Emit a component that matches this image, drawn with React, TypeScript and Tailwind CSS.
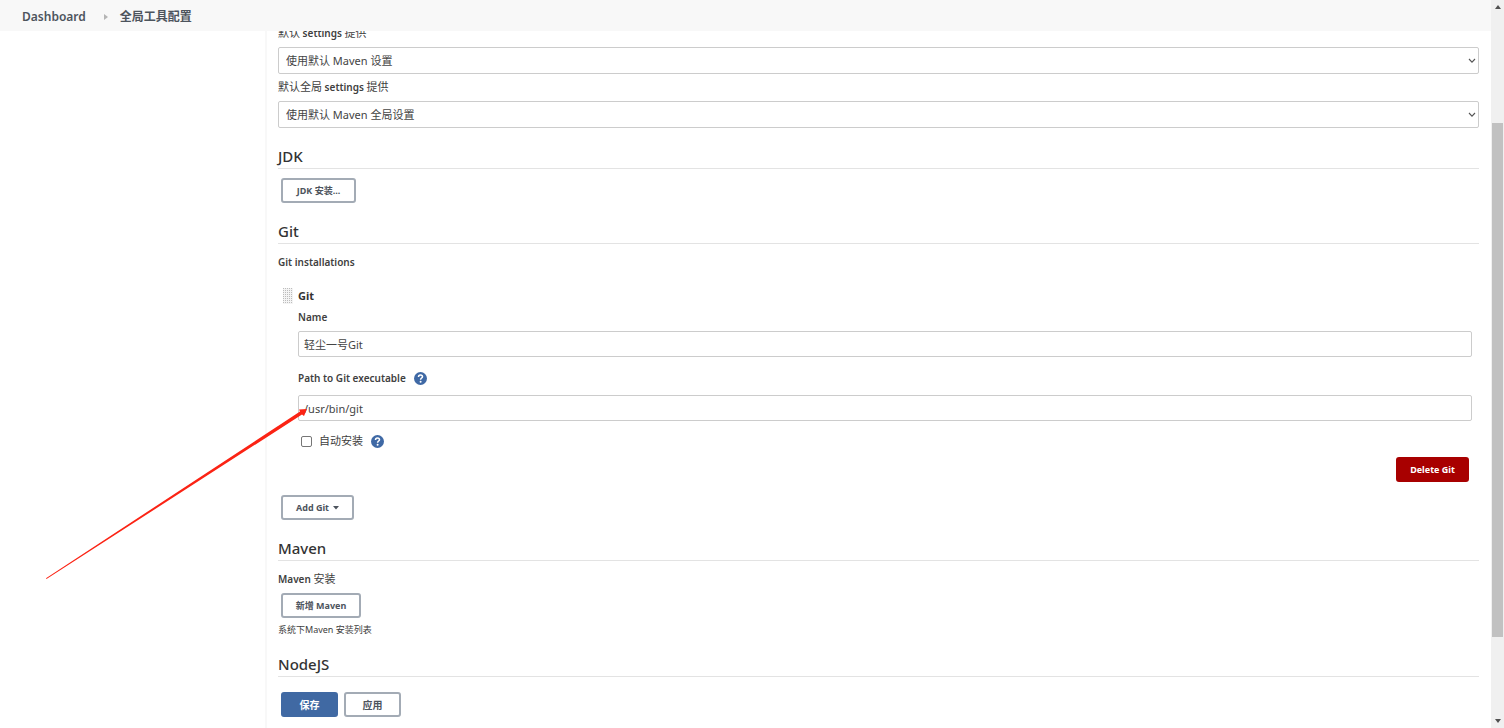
import React, { useState } from "react";
import clsx from "clsx";

type ButtonProps = React.ButtonHTMLAttributes<HTMLButtonElement> & {
  variant?: "outline" | "primary" | "danger";
  size?: "sm" | "md";
};

const Button = ({ variant = "outline", size = "sm", className, ...props }: ButtonProps) => (
  <button
    type="button"
    className={clsx(
      "flex h-[25px] items-center justify-center rounded-[3px] border-2 leading-4 font-bold",
      size === "sm" && "text-[9px]",
      size === "md" && "text-[10px]",
      variant === "outline" && "border-[#a3abb5] bg-white text-[#4d545d]",
      variant === "primary" && "border-[#4069a3] bg-[#4069a3] text-white",
      variant === "danger" && "border-[#a80000] bg-[#a80000] text-white",
      className
    )}
    {...props}
  />
);

const SectionTitle = ({ children }: { children: React.ReactNode }) => (
  <h2 className="h-[23px] border-b border-[#e3e3e3] text-[15px] leading-5 font-medium text-[#333333]">
    {children}
  </h2>
);

const Cjk = ({ children }: { children: React.ReactNode }) => (
  <span className="text-[11px] font-normal">{children}</span>
);

type SelectFieldProps = {
  id: string;
  label: React.ReactNode;
  option: string;
};

const SelectField = ({ id, label, option }: SelectFieldProps) => (
  <div className="flex flex-col gap-1.5">
    <label htmlFor={id} className="h-4 text-[10px] leading-4 font-semibold">
      {label}
    </label>
    <div className="relative">
      <select
        id={id}
        className="block h-[27px] w-full appearance-none rounded-[2px] border border-[#cccccc] bg-white pt-0.5 pr-6 pl-[7px] text-[11px] text-[#444444]"
      >
        <option>{option}</option>
      </select>
      <svg
        viewBox="0 0 8 6"
        className="pointer-events-none absolute top-[11px] right-[3px] h-1.5 w-2"
        fill="none"
        stroke="#555555"
        strokeWidth="1.1"
      >
        <path d="M1 1l3 3.200L7 1" />
      </svg>
    </div>
  </div>
);

type TextFieldProps = {
  id: string;
  value: string;
  onChange: (value: string) => void;
};

const TextField = ({ id, value, onChange }: TextFieldProps) => (
  <input
    id={id}
    type="text"
    value={value}
    onChange={(e) => onChange(e.target.value)}
    className="block h-[26px] w-full rounded-[2px] border border-[#cccccc] bg-white px-[5px] text-[11px] text-[#444444]"
  />
);

const HelpButton = ({ label }: { label: string }) => (
  <button type="button" aria-label={label} className="size-[13px]">
    <svg viewBox="0 0 13 13" className="size-[13px]" fill="none">
      <circle cx="6.5" cy="6.5" r="6.5" fill="#3f69a5" />
      <path
        d="M4.500 5C4.500 3.600 5.400 2.900 6.500 2.900S8.500 3.600 8.500 4.700C8.500 5.900 6.600 6.200 6.600 7.700"
        stroke="white"
        strokeWidth="1.5"
      />
      <circle cx="6.6" cy="9.7" r="1" fill="white" />
    </svg>
  </button>
);

const DragHandle = () => (
  <svg viewBox="0 0 10 16" className="h-4 w-2.5" aria-hidden="true">
    <defs>
      <pattern id="grip" width="2" height="2" patternUnits="userSpaceOnUse">
        <rect width="2" height="2" fill="#f4f4f4" />
        <rect width="1" height="1" fill="#bcbcbc" />
      </pattern>
    </defs>
    <rect width="10" height="16" fill="url(#grip)" />
  </svg>
);

const Header = () => (
  <header className="relative z-10 flex h-[31px] shrink-0 items-center bg-[#f8f8f8] pt-0.5 pl-[22px] text-[12px] font-bold text-[#4d545d]">
    <a href="#dashboard" className="font-semibold">
      Dashboard
    </a>
    <svg viewBox="0 0 4 6" className="mr-3 ml-[18px] h-1.5 w-1" fill="#b5b5b5">
      <path d="M0 0l4 3-4 3z" />
    </svg>
    <a href="#tools">全局工具配置</a>
  </header>
);

const Scrollbar = () => (
  <div className="flex w-[13px] shrink-0 flex-col items-center bg-[#f0f0f0]" aria-hidden="true">
    <svg viewBox="0 0 6 4" className="mt-[5px] h-1 w-1.5" fill="#505050">
      <path d="M0 4l3-4 3 4z" />
    </svg>
    <div className="flex w-full grow flex-col pt-[114px] pb-[82px]">
      <div className="mx-px grow bg-[#c1c1c1]" />
    </div>
    <svg viewBox="0 0 6 4" className="mb-[5px] h-1 w-1.5" fill="#505050">
      <path d="M0 0l3 4 3-4z" />
    </svg>
  </div>
);

const GitInstallation = () => {
  const [name, setName] = useState("轻尘一号Git");
  const [path, setPath] = useState("/usr/bin/git");
  const [autoInstall, setAutoInstall] = useState(false);

  return (
    <div className="relative mt-[18px] flex gap-[5px] pr-[7px] pl-[5px]">
      <DragHandle />
      <div className="min-w-0 grow">
        <h3 className="text-[11px] leading-4 font-bold text-[#333333]">Git</h3>
        <label htmlFor="git-name" className="mt-[5px] block text-[10px] leading-4 font-semibold">
          Name
        </label>
        <div className="mt-1.5">
          <TextField id="git-name" value={name} onChange={setName} />
        </div>
        <div className="mt-[13px] flex items-center gap-2">
          <label htmlFor="git-path" className="text-[10px] leading-4 font-semibold">
            Path to Git executable
          </label>
          <HelpButton label="Help for Path to Git executable" />
        </div>
        <div className="mt-[9px]">
          <TextField id="git-path" value={path} onChange={setPath} />
        </div>
        <div className="mt-3 flex items-center pl-[3px]">
          <input
            id="git-auto"
            type="checkbox"
            checked={autoInstall}
            onChange={(e) => setAutoInstall(e.target.checked)}
            className="size-[11px] appearance-none rounded-[2px] border border-[#767676] bg-white checked:bg-[#4069a3]"
          />
          <label htmlFor="git-auto" className="mr-2 ml-[7px] text-[11px] leading-4">
            自动安装
          </label>
          <HelpButton label="Help for 自动安装" />
        </div>
        <div className="mt-2 flex justify-end pr-[3px]">
          <Button variant="danger" className="w-[73px]">
            Delete Git
          </Button>
        </div>
      </div>
      <svg
        viewBox="0 0 262 172"
        className="pointer-events-none absolute top-[120px] -left-[232px] h-[172px] w-[262px]"
        fill="#fb2314"
        aria-hidden="true"
      >
        <path d="M0 170.300L254 3.500 253 1.500 261 1 258 8 256 6.500.500 171z" />
      </svg>
    </div>
  );
};

const App = () => {
  return (
    <div className="flex h-screen overflow-hidden bg-white font-['Noto_Sans','Noto_Sans_CJK_SC',sans-serif] text-[11px] text-[#404040]">
      <div className="flex min-w-0 grow flex-col">
        <Header />
        <div className="flex min-h-0 grow">
          <aside className="w-[265px] shrink-0" />
          <main className="-mt-1.5 min-w-0 grow border-l-2 border-[#f8f8f8] pr-3 pl-[11px]">
            <div className="flex flex-col gap-[5px]">
              <SelectField
                id="maven-settings"
                label={
                  <>
                    <Cjk>默认</Cjk> settings <Cjk>提供</Cjk>
                  </>
                }
                option="使用默认 Maven 设置"
              />
              <SelectField
                id="maven-global-settings"
                label={
                  <>
                    <Cjk>默认全局</Cjk> settings <Cjk>提供</Cjk>
                  </>
                }
                option="使用默认 Maven 全局设置"
              />
            </div>

            <section className="mt-[18px]">
              <SectionTitle>JDK</SectionTitle>
              <Button className="mt-[9px] ml-[3px] w-[75px]">JDK 安装...</Button>
            </section>

            <section className="mt-[18px]">
              <SectionTitle>Git</SectionTitle>
              <p className="mt-2.5 text-[10px] leading-4 font-semibold">Git installations</p>
              <GitInstallation />
              <Button className="mt-[13px] ml-[3px] w-[73px] gap-1">
                Add Git
                <svg viewBox="0 0 6 4" className="h-1 w-1.5" fill="#4d545d">
                  <path d="M0 0h6L3 3.500z" />
                </svg>
              </Button>
            </section>

            <section className="mt-[18px]">
              <SectionTitle>Maven</SectionTitle>
              <p className="mt-2.5 h-4 text-[10px] leading-4 font-semibold">
                Maven <Cjk>安装</Cjk>
              </p>
              <Button className="mt-1.5 ml-[3px] w-20">新增 Maven</Button>
              <p className="mt-1 text-[9px] leading-4">系统下Maven 安装列表</p>
            </section>

            <section className="mt-[16px]">
              <SectionTitle>NodeJS</SectionTitle>
            </section>

            <div className="mt-[15px] ml-[3px] flex gap-1.5">
              <Button variant="primary" size="md" className="w-[57px]">
                保存
              </Button>
              <Button size="md" className="w-[57px]">
                应用
              </Button>
            </div>
          </main>
        </div>
      </div>
      <Scrollbar />
    </div>
  );
};

export default App;
